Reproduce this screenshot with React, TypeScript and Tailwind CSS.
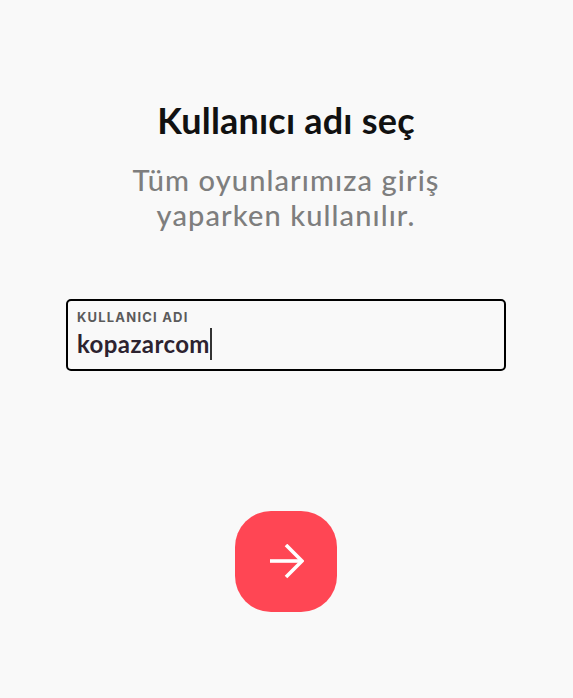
import React from "react";

const App = () => {
  return (
    <div className="min-h-screen bg-[#f9f9f9] flex flex-col items-center pt-[97px] pr-px font-['Lato','Noto_Sans',sans-serif]">
      <h1 className="text-[36px] leading-[46px] font-bold tracking-[0.2px] text-[#111111] text-center">
        Kullanıcı adı seç
      </h1>
      <p className="mt-[19px] text-[29px] leading-[35px] font-medium tracking-[1.1px] text-[#7e7e7e] text-center">
        Tüm oyunlarımıza giriş
        <br />
        yaparken kullanılır.
      </p>
      <div className="mt-[67px] w-[440px] h-[72px] rounded-[5px] border-2 border-black px-[9px] pt-[8px]">
        <div className="text-[13px] leading-[16px] font-bold tracking-[1.2px] text-[#5b5b5b] font-['Inter',sans-serif]">
          KULLANICI ADI
        </div>
        <div className="flex items-center h-[32px] mt-[3px]">
          <span className="text-[24px] leading-[32px] font-bold tracking-[0.4px] text-[#2d2330]">kopazarcom</span>
          <span className="w-[2px] h-[32px] bg-[#333333]" />
        </div>
      </div>
      <button className="mt-[140px] w-[102px] h-[101px] rounded-[36px] bg-[#ff4654] flex items-center justify-center">
        <svg width="36" height="36" viewBox="0 0 36 36" fill="none" stroke="white" strokeWidth="3.6">
          <path d="M2 17 H33" />
          <path d="M18 1 L34 17 L18 33" />
        </svg>
      </button>
    </div>
  );
};

export default App;
